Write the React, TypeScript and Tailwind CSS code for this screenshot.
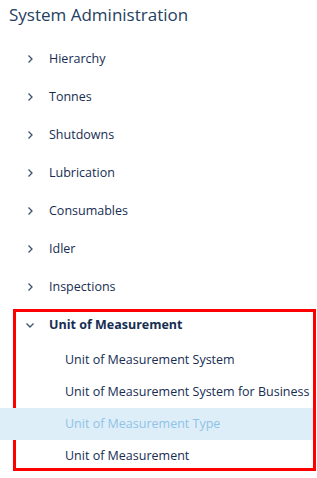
import React from "react";

const sections = [
  "Hierarchy",
  "Tonnes",
  "Shutdowns",
  "Lubrication",
  "Consumables",
  "Idler",
  "Inspections",
];

const uomItems = [
  "Unit of Measurement System",
  "Unit of Measurement System for Business",
  "Unit of Measurement Type",
  "Unit of Measurement",
];

function Chevron({ open }: { open?: boolean }) {
  return (
    <svg width="10" height="10" viewBox="0 0 10 10" className="shrink-0">
      {open ? (
        <path d="M1.5 3.5 L5 7 L8.5 3.5" fill="none" stroke="#3b5270" strokeWidth="1.3" />
      ) : (
        <path d="M3.5 1.5 L7 5 L3.5 8.5" fill="none" stroke="#3b5270" strokeWidth="1.3" />
      )}
    </svg>
  );
}

export default function App() {
  const active = "Unit of Measurement Type";

  return (
    <div
      className="w-[317px] h-[478px] bg-white overflow-hidden"
      style={{ fontFamily: '"Open Sans", "Liberation Sans", sans-serif' }}
    >
      <h1 className="pl-[9px] pt-[3px] h-[40px] text-[17px] leading-[24px] text-[#24405f]">
        System Administration
      </h1>

      <nav>
        {sections.map((s) => (
          <div key={s} className="flex items-center h-[38px] pl-[25px] gap-[14px] text-[12.5px] text-[#162d52]">
            <Chevron />
            <span>{s}</span>
          </div>
        ))}

        {/* highlighted group */}
        <div className="ml-[13px] mr-[1px] mt-[3px] border-[3px] border-[#ff0000]">
          <div className="flex items-center h-[32px] pb-[6px] pl-[9px] gap-[14px] text-[12.5px] font-bold text-[#162d52]">
            <Chevron open />
            <span>Unit of Measurement</span>
          </div>
          {uomItems.map((item, i) => {
            const last = i === uomItems.length - 1;
            if (item === active) {
              return (
                <div
                  key={item}
                  className="flex items-center h-[32px] -ml-[16px] pl-[65px] bg-[#deeef9] text-[12.5px] text-[#8ec3e6]"
                >
                  {item}
                </div>
              );
            }
            return (
              <div
                key={item}
                className={
                  last
                    ? "flex items-center h-[28px] pt-[4px] pl-[49px] text-[12.5px] text-[#162d52]"
                    : "flex items-center h-[32px] pl-[49px] text-[12.5px] text-[#162d52]"
                }
              >
                {item}
              </div>
            );
          })}
        </div>
      </nav>
    </div>
  );
}
